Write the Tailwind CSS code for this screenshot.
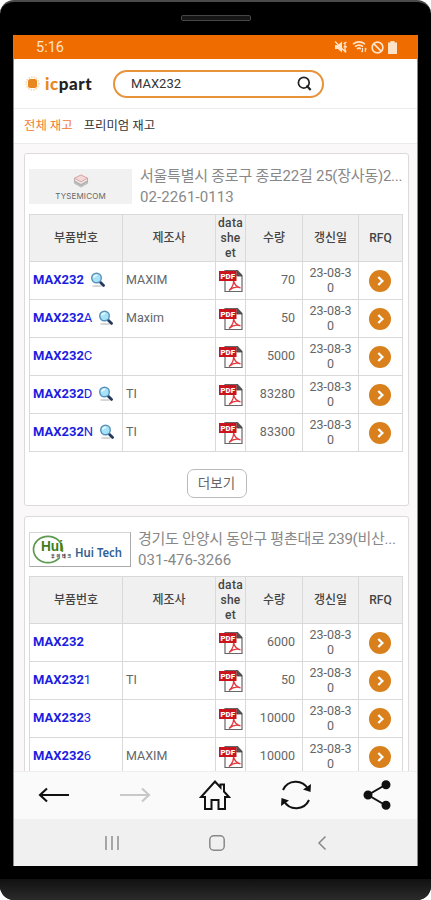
<!DOCTYPE html>
<html lang="ko">
<head>
  <meta charset="UTF-8" />
  <meta name="viewport" content="width=device-width, initial-scale=1" />
  <title>icpart</title>
  <script src="https://cdn.jsdelivr.net/npm/@tailwindcss/browser@4"></script>
  <style>
    body {
      font-family: Roboto, 'Noto Sans CJK KR', sans-serif;
    }
  </style>
</head>

<body class="bg-white w-[431px] h-[900px] overflow-hidden">

  <!-- Shared icons -->
  <svg class="hidden">
    <symbol id="lens" viewBox="0 0 16 16">
      <ellipse cx="7" cy="14" rx="5" ry="1.1" fill="#d4d4d4" />
      <path d="M9.3 9.3 13.6 13.4" stroke="#24395c" stroke-width="2.8" stroke-linecap="round" />
      <circle cx="6.5" cy="6" r="4.8" fill="#a5e3fa" stroke="#5a91b8" stroke-width="1.4" />
      <path d="M3.8 5.6Q4.5 3.2 7.2 3.3" stroke="#effcff" stroke-width="1.4" fill="none" />
    </symbol>
    <symbol id="pdf" viewBox="0 0 24 24">
      <path d="M6 1.5H18.5L23 6.5V22.5H6Z" fill="#fff" stroke="#666" stroke-width="1.2" />
      <path d="M17.8 1.5V7H23Z" fill="#555" stroke="#444" stroke-width=".8" />
      <path d="M10 21.5Q14.5 17.5 14.6 12Q16 17.5 21.5 18.8Q15.5 16.8 10 21.5" fill="none" stroke="#e0383f" stroke-width="1.3" />
      <rect x="0" y="2" width="17.5" height="10" fill="#c9141d" />
      <text x="8.7" y="9.8" text-anchor="middle" font-size="8" font-weight="900" fill="#fff" textLength="14.5" lengthAdjust="spacingAndGlyphs">PDF</text>
    </symbol>
    <symbol id="go" viewBox="0 0 22 22">
      <circle cx="11" cy="11" r="11" fill="#d9801c" />
      <path d="M9.3 7 13.4 11 9.3 15" fill="none" stroke="#fff" stroke-width="2.3" />
    </symbol>
  </svg>

  <!-- Phone body -->
  <div class="w-[431px] h-[900px] rounded-[14px] bg-black border-t-2 border-[#4a4a4a] flex flex-col items-center overflow-hidden">
    <div class="h-[33px] w-full flex justify-center pt-[13px] shrink-0">
      <div class="w-[70px] h-[6px] rounded-[2px] border border-[#454545] bg-[#161616]"></div>
    </div>

    <!-- Screen -->
    <div class="w-[405px] h-[831px] shrink-0 bg-white border-x border-[#8a8a8a] flex flex-col overflow-hidden">

      <!-- Status bar -->
      <div class="h-6 shrink-0 bg-[#ef6c00] flex items-center justify-between pl-[22px] pr-[20px] text-[#ffe3c8]">
        <span class="text-[14.5px] leading-6 pt-px">5:16</span>
        <div class="flex items-center gap-[4px]">
          <svg class="w-[14px] h-[14px]" viewBox="0 0 14 14" fill="currentColor"><path d="M1 5H4L8 1.5V12.5L4 9H1Z" /><path d="M1 1.5 12 12.5M9.5 3.5 12.5 2M9.5 6.8H13M9.5 10 12.5 11M11 3V11" stroke="currentColor" stroke-width="1.3" /></svg>
          <svg class="w-[15px] h-[14px]" viewBox="0 0 15 14" fill="none" stroke="currentColor" stroke-width="1.6"><path d="M1 4.2Q7 -.4 13 4.2M3 6.7Q7 3.4 11 6.7M5 9Q7 7.2 9 9" /><path d="M10.5 8V12M9.3 10.8 10.5 12.2M13.3 12V8M13.3 8 14.5 9.3" stroke-width="1.1" /></svg>
          <svg class="w-[13px] h-[13px]" viewBox="0 0 13 13" fill="none" stroke="currentColor" stroke-width="1.7"><circle cx="6.5" cy="6.5" r="5.4" /><path d="M2.7 2.7 10.3 10.3" /></svg>
          <svg class="w-[9px] h-[13px]" viewBox="0 0 9 13" fill="currentColor"><path d="M2.5 0H6.5V1.5H9V13H0V1.5H2.5Z" /></svg>
        </div>
      </div>

      <!-- Logo and search -->
      <div class="h-[50px] shrink-0 border-b border-[#ececec] flex items-center pl-[11px]">
        <svg class="w-[15px] h-[15px]" viewBox="0 0 15 15">
          <circle cx="7.5" cy="7.5" r="6.3" fill="none" stroke="#fadcb9" stroke-width="2" stroke-dasharray="1.5 1" />
          <rect x="3" y="3" width="9" height="9" rx="2.5" fill="#e8871e" />
        </svg>
        <span class="ml-[5px] w-[48px] text-[17px] font-black tracking-[.55px] leading-5 text-[#222]" style="font-family: Lato, sans-serif"><span class="text-[#e8871e]">ic</span>part</span>
        <div class="ml-[20px] w-[211px] h-7 rounded-full border-2 border-[#e8923a] flex items-center justify-between pl-4 pr-[10px]">
          <span class="text-[13px] text-[#333]">MAX232</span>
          <svg class="w-[15px] h-[15px]" viewBox="0 0 15 15" fill="none" stroke="#222"><circle cx="6.8" cy="6.7" r="5.4" stroke-width="1.7" /><path d="M9.5 9.5 13.7 14" stroke-width="2.2" /></svg>
        </div>
      </div>

      <!-- Tabs -->
      <div class="h-[35px] shrink-0 border-b border-[#ececec] flex items-center gap-[11px] pl-[10px] pt-px text-[12.4px]">
        <span class="text-[#f07a30]">전체 재고</span>
        <span class="text-[#333]">프리미엄 재고</span>
      </div>

      <!-- Stock list -->
      <main class="flex-1 min-h-0 overflow-hidden bg-[#faf8f8] px-[10px] pt-[9px] flex flex-col gap-[10px]">

        <section class="w-[385px] h-[353px] shrink-0 bg-white border border-[#dedada] rounded-[3px] pl-[4px] pt-[11px]">
          <div class="h-[49px] flex">
            <div class="mt-[4px] w-[103px] h-[35px] bg-[#f1f1f2] flex flex-col items-center pt-[5px]">
              <svg class="w-4 h-[15px]" viewBox="0 0 16 15" fill="none"><path d="M1 7 8 11 15 7V10L8 14 1 10Z" fill="#c5c5c8" stroke="#aaa" stroke-width=".7" /><path d="M1 4.5 8 1 15 4.5 8 8.5Z" fill="#f3d8d8" stroke="#d99a9a" /><path d="M1 4.5V8L8 12 15 8V4.5" stroke="#b4a8a8" /></svg>
              <span class="text-[8px] leading-[16px] tracking-[.15px] text-[#666]" style="font-family: Inter, sans-serif">TYSEMICOM</span>
            </div>
            <div class="ml-[8px] pt-px text-[15px] leading-[21px] text-[#888] whitespace-nowrap">
              <p class="text-[15px] tracking-[-.24px]">서울특별시 종로구 종로22길 25(장사동)2...</p>
              <p class="tracking-[.1px]">02-2261-0113</p>
            </div>
          </div>
          <div class="stock w-[374px] border-l border-t border-[#d9d9d9]" data-list="tysemicom"></div>
          <div class="flex justify-center mt-[17px] pr-1">
            <button class="w-[60px] h-[29px] border border-[#bbb] rounded-[7px] text-[13.5px] text-[#666]">더보기</button>
          </div>
        </section>

        <section class="w-[385px] h-[353px] shrink-0 bg-white border border-[#dedada] rounded-[3px] pl-[4px] pt-[12px]">
          <div class="h-[47px] flex">
            <div class="mt-[3px] w-[102px] h-[35px] bg-white border border-[#d5d5d5] border-b-[#aaa] border-r-[#aaa]">
              <svg class="w-[100px] h-[33px]" viewBox="0 0 100 33">
                <ellipse cx="18" cy="16.5" rx="14.5" ry="13.2" fill="none" stroke="#5c9a50" stroke-width="1.7" />
                <rect x="22" y="19" width="20" height="6" fill="#fff" />
                <text x="11" y="17.5" font-family="Liberation Sans" font-size="14" font-weight="700" fill="#3d7d22" textLength="22" lengthAdjust="spacingAndGlyphs">Hui</text>
                <text x="21" y="24.5" font-family="Noto Sans CJK KR" font-size="4" font-weight="900" fill="#333" textLength="20">후이테크</text>
                <text x="45" y="24" font-family="Noto Sans" font-size="12.5" font-weight="600" fill="#315f94" textLength="47" lengthAdjust="spacingAndGlyphs">Hui Tech</text>
              </svg>
            </div>
            <div class="ml-[7px] text-[15px] leading-[21px] text-[#888] whitespace-nowrap">
              <p class="text-[15px] tracking-[-.25px]">경기도 안양시 동안구 평촌대로 239(비산...</p>
              <p class="tracking-[.05px]">031-476-3266</p>
            </div>
          </div>
          <div class="stock w-[374px] border-l border-t border-[#d9d9d9]" data-list="huitech"></div>
        </section>
      </main>

      <!-- App toolbar -->
      <div class="h-[48px] shrink-0 bg-[#fafafa] border-t border-[#eee] grid grid-cols-5 items-center justify-items-center pb-[2px]">
        <svg class="w-[32px] h-[32px]" viewBox="0 0 32 32" fill="none" stroke="#111" stroke-width="2.1"><path d="M31 16H2M9 9.5 2 16 9 22.5" /></svg>
        <svg class="w-[32px] h-[32px]" viewBox="0 0 32 32" fill="none" stroke="#c8c8c8" stroke-width="2.1"><path d="M1 16H30M23 9.5 30 16 23 22.5" /></svg>
        <svg class="w-[32px] h-[32px]" viewBox="0 0 32 32" fill="none" stroke="#111" stroke-width="2"><path d="M6 18H2L16 2.5 21.5 8.5V5.5H25V12.5L30 18H26V30H19.5V21H12.5V30H6Z" /></svg>
        <svg class="w-[32px] h-[32px]" viewBox="0 0 32 32" fill="none" stroke="#111" stroke-width="2"><path d="M3 11A14 14 0 0 1 28 10M29 21A14 14 0 0 1 4 22" /><path d="M31 5 30.5 13 23 10.5ZM1 27 1.5 19 9 21.5Z" fill="#111" stroke="none" /></svg>
        <svg class="w-[32px] h-[32px]" viewBox="0 0 32 32" stroke="#111" stroke-width="2" fill="#111"><path d="M25 5.5 7 16 25 26.5" fill="none" /><circle cx="25" cy="5.8" r="3.5" /><circle cx="7" cy="16" r="3.5" /><circle cx="25" cy="26.2" r="3.5" /></svg>
      </div>

      <!-- System navigation -->
      <div class="h-[47px] shrink-0 bg-[#f0f0f0] flex items-center justify-center gap-[87px] pl-[3px]">
        <svg class="w-[18px] h-[18px]" viewBox="0 0 18 18" stroke="#999" stroke-width="1.7"><path d="M3 2V16M9 2V16M15 2V16" /></svg>
        <svg class="w-[18px] h-[18px]" viewBox="0 0 18 18" fill="none" stroke="#888" stroke-width="1.5"><rect x="1.8" y="1.8" width="14.4" height="14.4" rx="4" /></svg>
        <svg class="w-[18px] h-[18px]" viewBox="0 0 18 18" fill="none" stroke="#888" stroke-width="1.5"><path d="M12.5 2.5 6 9 12.5 15.5" /></svg>
      </div>
    </div>

    <!-- Lower bezel -->
    <div class="w-full flex-1 flex items-end">
      <div class="w-full h-[21px] bg-gradient-to-b from-[#111] to-[#2b2b2b]"></div>
    </div>
  </div>

  <script>
    const keyword = 'MAX232';

    // [rest of the part number, maker, quantity, has image]
    const stock = {
      tysemicom: [
        ['', 'MAXIM', 70, true],
        ['A', 'Maxim', 50, true],
        ['C', '', 5000, false],
        ['D', 'TI', 83280, true],
        ['N', 'TI', 83300, true],
      ],
      huitech: [
        ['', '', 6000, false],
        ['1', 'TI', 50, false],
        ['3', '', 10000, false],
        ['6', 'MAXIM', 10000, false],
      ],
    };

    const head = `
      <div class="grid grid-cols-[93px_93px_30px_57px_56px_44px] h-[47px] bg-[#f0f0f0] text-[12px] font-medium text-[#444] text-center *:border-r *:border-b *:border-[#d9d9d9] *:flex *:items-center *:justify-center">
        <div>부품번호</div>
        <div>제조사</div>
        <div class="leading-[15px] tracking-[.3px]">data<br>she<br>et</div>
        <div>수량</div>
        <div>갱신일</div>
        <div>RFQ</div>
      </div>`;

    document.querySelectorAll('.stock').forEach(table => {
      const rows = stock[table.dataset.list].map(([suffix, maker, qty, image]) => `
        <div class="grid grid-cols-[93px_93px_30px_57px_56px_44px] h-[38px] text-[12.5px] text-[#666] *:border-r *:border-b *:border-[#d9d9d9] *:flex *:items-center">
          <div class="pl-[3px] pb-[2px] gap-[6px] text-[13px] text-[#1d1de0]"><span><b>${keyword}</b>${suffix}</span>${image ? '<svg class="w-4 h-4"><use href="#lens" /></svg>' : ''}</div>
          <div class="pl-[3px]">${maker}</div>
          <div class="pl-[3px]"><svg class="w-6 h-6 shrink-0"><use href="#pdf" /></svg></div>
          <div class="justify-end pr-[7px]">${qty}</div>
          <div class="justify-center text-center leading-[15px] pb-[2px]">23-08-3<br>0</div>
          <div class="justify-center pr-px"><svg class="w-[22px] h-[22px]"><use href="#go" /></svg></div>
        </div>`);
      table.innerHTML = head + rows.join('');
    });
  </script>

</body>
</html>
